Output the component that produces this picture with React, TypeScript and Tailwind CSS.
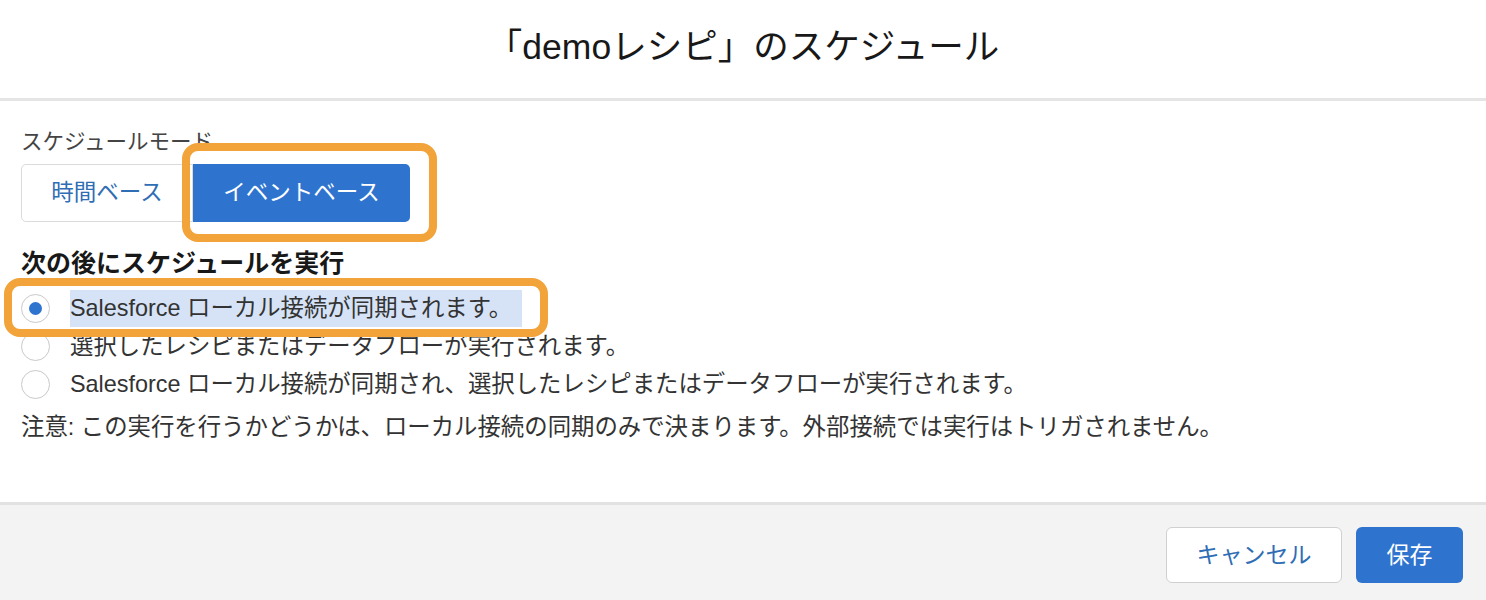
import React from 'react';

const font = { fontFamily: '"Liberation Sans", "Noto Sans CJK JP", sans-serif' };

const Radio = ({ checked }: { checked?: boolean }) => (
  <span className="flex h-[29px] w-[29px] shrink-0 items-center justify-center rounded-full border border-[#c9c9c9] bg-white">
    {checked && <span className="h-[13px] w-[13px] rounded-full bg-[#2e74cf]" />}
  </span>
);

const ScheduleModal = () => {
  const options = [
    { label: 'Salesforce ローカル接続が同期されます。', checked: true },
    { label: '選択したレシピまたはデータフローが実行されます。' },
    { label: 'Salesforce ローカル接続が同期され、選択したレシピまたはデータフローが実行されます。' },
  ];

  return (
    <div className="relative min-h-[600px] w-full overflow-hidden bg-white" style={font}>
      <header className="flex h-[101px] items-center justify-center border-b-[3px] border-[#e5e5e5] pb-[2px]">
        <h1 className="text-[35.5px] leading-none text-[#181818]">「demoレシピ」のスケジュール</h1>
      </header>

      <div className="px-[21px] pt-[29px]">
        <div className="text-[21.5px] leading-[24px] text-[#444]">スケジュールモード</div>
        <div className="mt-[10px] flex h-[58px]">
          <button className="w-[172px] rounded-l-[5px] border border-[#dddbda] bg-white text-[22.5px] text-[#2f6db5]">
            時間ベース
          </button>
          <button className="w-[217px] rounded-r-[5px] bg-[#2e74cf] text-[22.5px] text-white">
            イベントベース
          </button>
        </div>

        <h2 className="mt-[26px] text-[25px] font-bold leading-[30px] text-[#181818]">次の後にスケジュールを実行</h2>

        <div className="mt-[11px] flex flex-col">
          {options.map((o, i) => (
            <label key={i} className="flex h-[38px] items-center gap-[20px] text-[23.4px] text-[#333]">
              <Radio checked={o.checked} />
              <span className={o.checked ? 'inline-block h-[37px] bg-[#d6e3f7] pr-[10px] leading-[37px]' : 'leading-[38px]'}>
                {o.label}
              </span>
            </label>
          ))}
        </div>

        <p className="mt-[9px] text-[23.4px] leading-[30px] text-[#333]">
          注意: この実行を行うかどうかは、ローカル接続の同期のみで決まります。外部接続では実行はトリガされません。
        </p>
      </div>

      <footer className="mt-[60px] flex h-[120px] items-start justify-end gap-[14px] border-t-[3px] border-[#e2e2e2] bg-[#f3f3f3] pr-[23px] pt-[22px]">
        <button className="h-[56px] w-[176px] rounded-[6px] border border-[#d0d0d0] bg-white text-[23px] text-[#2f6db5]">
          キャンセル
        </button>
        <button className="h-[56px] w-[107px] rounded-[6px] bg-[#2e74cf] text-[23px] text-white">保存</button>
      </footer>

      {/* annotation boxes */}
      <div className="pointer-events-none absolute left-[182px] top-[143px] h-[99px] w-[255px] rounded-[16px] border-[8px] border-[#f2a33a]" />
      <div className="pointer-events-none absolute left-[4px] top-[278px] h-[59px] w-[544px] rounded-[16px] border-[8px] border-[#f2a33a]" />
    </div>
  );
};

export default function App() {
  return <ScheduleModal />;
}
